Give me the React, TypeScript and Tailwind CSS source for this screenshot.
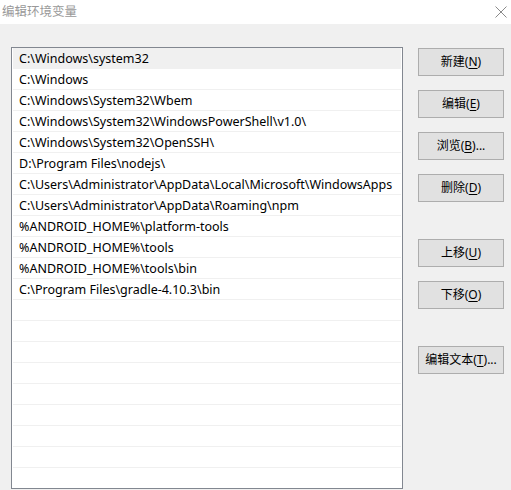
import React from 'react';

const paths = [
  'C:\\Windows\\system32',
  'C:\\Windows',
  'C:\\Windows\\System32\\Wbem',
  'C:\\Windows\\System32\\WindowsPowerShell\\v1.0\\',
  'C:\\Windows\\System32\\OpenSSH\\',
  'D:\\Program Files\\nodejs\\',
  'C:\\Users\\Administrator\\AppData\\Local\\Microsoft\\WindowsApps',
  'C:\\Users\\Administrator\\AppData\\Roaming\\npm',
  '%ANDROID_HOME%\\platform-tools',
  '%ANDROID_HOME%\\tools',
  '%ANDROID_HOME%\\tools\\bin',
  'C:\\Program Files\\gradle-4.10.3\\bin',
];

const rows = [...paths, ...Array(9).fill('')];

const font = { fontFamily: '"Noto Sans", "Noto Sans CJK SC", sans-serif' };

const WinButton = ({ label, hotkey, dots, className = '' }: { label: string; hotkey: string; dots?: boolean; className?: string }) => (
  <button className={`h-[28px] w-[86px] border border-[#adadad] bg-[#e1e1e1] text-[12px] text-black flex items-center justify-center ${className}`}>
    {label}(<span className="underline underline-offset-2">{hotkey}</span>){dots && '...'}
  </button>
);

export default function App() {
  return (
    <div className="w-[511px] h-[490px] bg-[#f0f0f0] flex flex-col overflow-hidden" style={font}>
      <div className="h-[24px] bg-white flex items-center justify-between pl-[2px] pr-[3px] shrink-0">
        <span className="text-[12.5px] text-[#999999]">编辑环境变量</span>
        <svg width="12" height="12" viewBox="0 0 12 12" className="mr-[1px]">
          <path d="M0.5 0.5 L11.5 11.5 M11.5 0.5 L0.5 11.5" stroke="#8a8a8a" strokeWidth="1" />
        </svg>
      </div>
      <div className="flex pt-[23px] pl-[11px] gap-[15px]">
        <div className="w-[392px] h-[442px] border border-[#828790] bg-white overflow-hidden shrink-0">
          {rows.map((p, i) => (
            <div
              key={i}
              className={`h-[21px] mx-px border-b border-[#f0f0f0] flex items-center pt-[2px] pl-[6px] text-[12.5px] text-black whitespace-nowrap ${i === 0 ? 'bg-[#f0f0f0]' : ''}`}
            >
              {p}
            </div>
          ))}
        </div>
        <div className="flex flex-col pt-px">
          <div className="flex flex-col gap-[14px]">
            <WinButton label="新建" hotkey="N" />
            <WinButton label="编辑" hotkey="E" />
            <WinButton label="浏览" hotkey="B" dots />
            <WinButton label="删除" hotkey="D" />
          </div>
          <div className="flex flex-col gap-[14px] mt-[37px]">
            <WinButton label="上移" hotkey="U" />
            <WinButton label="下移" hotkey="O" />
          </div>
          <WinButton label="编辑文本" hotkey="T" dots className="mt-[37px]" />
        </div>
      </div>
    </div>
  );
}
